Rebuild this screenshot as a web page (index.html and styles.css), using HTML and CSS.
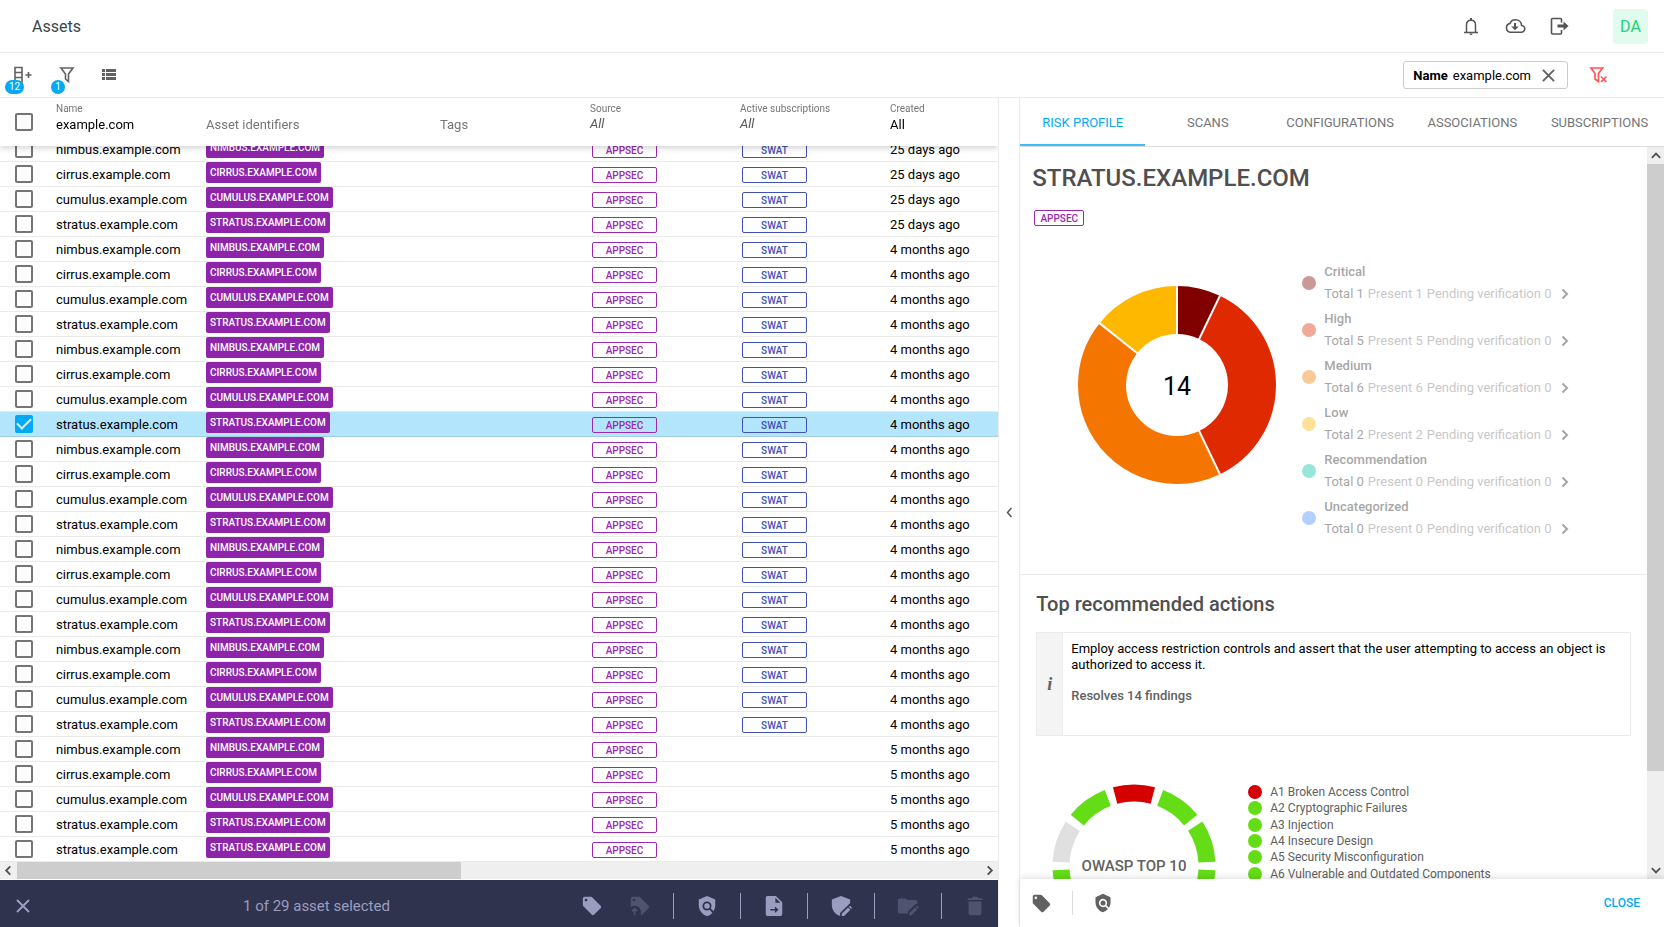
FILE: index.html
```html
<!DOCTYPE html>
<html lang="en">
<head>
    <meta charset="UTF-8">
    <meta name="viewport" content="width=device-width, initial-scale=1.0">
    <title>Assets</title>
    <link rel="stylesheet" href="styles.css">
</head>
<body>
    <!-- Shared icons -->
    <svg class="sprite" aria-hidden="true">
        <symbol id="icon-tag" viewBox="0 0 24 24"><path d="M21.4 11.6l-9-9A2 2 0 0 0 11 2H4a2 2 0 0 0-2 2v7c0 .6.2 1.1.6 1.4l9 9a2 2 0 0 0 2.8 0l7-7a2 2 0 0 0 0-2.8zM5.500 7a1.500 1.500 0 1 1 0-3 1.500 1.500 0 0 1 0 3z"/></symbol>
        <symbol id="icon-policy" viewBox="0 0 24 24"><path d="M21 5l-9-4-9 4v6c0 5.550 3.840 10.740 9 12 2.300-.560 4.330-1.900 5.880-3.710l-3.120-3.120a5 5 0 1 1 1.420-1.420l2.900 2.900C20.290 15.690 21 13.380 21 11z"/><circle cx="12" cy="12" r="3"/></symbol>
        <symbol id="icon-close" viewBox="0 0 14 14"><path d="M1 1l12 12M13 1L1 13" fill="none" stroke="currentColor" stroke-width="2"/></symbol>
        <symbol id="icon-chevron" viewBox="0 0 8 12"><path d="M1.500 1.500L6 6l-4.500 4.500" fill="none" stroke="currentColor" stroke-width="2"/></symbol>
    </svg>

    <header class="topbar">
        <h1 class="page-title">Assets</h1>
        <nav class="topbar-actions">
            <button class="icon-btn" aria-label="Notifications"><svg width="24" height="24" viewBox="0 0 24 24"><path d="M5 18.500h14M7.500 18.500v-7.500c0-3 2-4.800 4.500-4.800s4.500 1.800 4.500 4.800v7.500" fill="none" stroke="currentColor" stroke-width="1.500"/><path d="M11 4h2v2.500h-2zM10.500 19.500h3a1.500 1.500 0 0 1-3 0z"/></svg></button>
            <button class="icon-btn" aria-label="Downloads"><svg width="24" height="24" viewBox="0 0 24 24"><path d="M7 18.200h11.200a3.300 3.300 0 0 0 .4-6.700C18.400 8 15.800 5.800 12.500 5.800c-2.600 0-4.600 1.300-5.400 3.600A4.500 4.500 0 0 0 7 18.200z" fill="none" stroke="currentColor" stroke-width="1.600"/><path d="M11 9h2v3.500h2.800L12 16.300l-3.800-3.800H11z"/></svg></button>
            <button class="icon-btn" aria-label="Log out"><svg width="24" height="24" viewBox="0 0 24 24"><path d="M14.500 8.500V5.500a1 1 0 0 0-1-1h-8a1 1 0 0 0-1 1v13.500a1 1 0 0 0 1 1h8a1 1 0 0 0 1-1v-3" fill="none" stroke="currentColor" stroke-width="1.600"/><path d="M10.500 10.500h6V7.500l5 4.500-5 4.500v-3h-6z"/></svg></button>
            <button class="avatar">DA</button>
        </nav>
    </header>

    <div class="toolbar">
        <button class="tool" aria-label="Columns">
            <svg width="20" height="18" viewBox="0 0 20 18"><path d="M2 1.500h7v15H2zM2 6.500h7M2 11.500h7M12.500 9h6M15.500 6v6" fill="none" stroke="currentColor" stroke-width="1.600"/></svg>
            <span class="badge">12</span>
        </button>
        <button class="tool" aria-label="Filters">
            <svg width="16" height="18" viewBox="0 0 16 18"><path d="M2 2h12l-4.500 6v7.500L6.500 13V8z" fill="none" stroke="currentColor" stroke-width="1.600"/></svg>
            <span class="badge">1</span>
        </button>
        <button class="tool" aria-label="List view">
            <svg width="16" height="14" viewBox="0 0 16 14"><path d="M1 1h3v3H1zM5 1h10v3H5zM1 5h3v3H1zM5 5h10v3H5zM1 9h3v3H1zM5 9h10v3H5z"/></svg>
        </button>
        <div class="filter-chip">
            <strong>Name</strong>
            <span>example.com</span>
            <button class="chip-close" aria-label="Remove filter"><svg width="13" height="13"><use href="#icon-close"/></svg></button>
        </div>
        <button class="clear-filters" aria-label="Clear filters">
            <svg width="19" height="18" viewBox="0 0 19 18"><path d="M2 2h11.500L9.500 7.500v8L6 13V7.500zM12 10.500l5.500 5.500M17.500 10.500L12 16" fill="none" stroke="currentColor" stroke-width="1.700"/></svg>
        </button>
    </div>

    <main class="workspace">
        <section class="assets">
            <div class="table-scroll" id="table-scroll">
                <table class="asset-table">
                    <thead>
                        <tr>
                            <th class="col-check"><input type="checkbox" class="check" aria-label="Select all"></th>
                            <th class="col-name"><label class="th-label" for="filter-name">Name</label><input id="filter-name" class="th-input" type="text" value="example.com"></th>
                            <th class="col-ids"><span class="th-label"></span><span class="th-empty">Asset identifiers</span></th>
                            <th class="col-tags"><span class="th-label"></span><span class="th-empty">Tags</span></th>
                            <th class="col-source"><span class="th-label">Source</span><span class="th-all">All</span></th>
                            <th class="col-subs"><span class="th-label">Active subscriptions</span><span class="th-all">All</span></th>
                            <th><span class="th-label">Created</span><span class="th-value">All</span></th>
                        </tr>
                    </thead>
                    <tbody id="asset-rows"></tbody>
                </table>
            </div>
            <div class="scrollbar-x">
                <svg class="arrow arrow-left" width="8" height="11"><use href="#icon-chevron"/></svg>
                <div class="track"><div class="thumb"></div></div>
                <svg class="arrow" width="8" height="11"><use href="#icon-chevron"/></svg>
            </div>
            <footer class="selection-bar">
                <button class="bar-close" aria-label="Clear selection"><svg width="14" height="14"><use href="#icon-close"/></svg></button>
                <span class="selection-text">1 of 29 asset selected</span>
                <div class="bar-actions">
                    <button class="bar-btn" aria-label="Tag"><svg width="22" height="22"><use href="#icon-tag"/></svg></button>
                    <button class="bar-btn" aria-label="Inherit tag" disabled><svg width="22" height="22" viewBox="0 0 24 24"><path d="M21.400 11.600l-9-9A2 2 0 0 0 11 2H4a2 2 0 0 0-2 2v9c1.200-.800 2.500-1.200 4-1.200 4 0 7 3 7 7V22c.600 0 1-.200 1.400-.600l7-7a2 2 0 0 0 0-2.800zM5.500 7a1.500 1.500 0 1 1 0-3 1.500 1.500 0 0 1 0 3z"/><path d="M6 22v-7M3.300 17.500L6 14.800l2.700 2.700" fill="none" stroke="currentColor" stroke-width="1.800"/></svg></button>
                    <span class="divider"></span>
                    <button class="bar-btn" aria-label="Scan"><svg width="22" height="22"><use href="#icon-policy"/></svg></button>
                    <span class="divider"></span>
                    <button class="bar-btn" aria-label="Export"><svg width="22" height="22" viewBox="0 0 24 24"><path fill-rule="evenodd" d="M14 1H5a2 2 0 0 0-2 2v18a2 2 0 0 0 2 2h14a2 2 0 0 0 2-2V8zM13.500 3l5.500 5.500h-5.500zM8 15.200h5v-2.700l4 3.600-4 3.600V17H8z"/></svg></button>
                    <span class="divider"></span>
                    <button class="bar-btn" aria-label="Edit policy"><svg width="22" height="22" viewBox="0 0 24 24"><path d="M22 5L12 1 2 5v6c0 5.500 3.800 10.500 9 12v-3.500L21.300 9.500l.7-.500z"/><path d="M12.800 20.500V23h2.500l7-7-2.500-2.500zM20.600 12.700l2.500 2.500.9-1.200-2-2.200z"/></svg></button>
                    <span class="divider"></span>
                    <button class="bar-btn" aria-label="Edit group" disabled><svg width="22" height="22" viewBox="0 0 26 24"><path d="M12 5l-2-2H3a2 2 0 0 0-2 2v14a2 2 0 0 0 2 2h10v-2.500l9-9H24V7a2 2 0 0 0-2-2z"/><path d="M14.500 20.500V23H17l7-7-2.500-2.500zM22.300 12.700l2.500 2.500 1.200-1.200-2.500-2.500z"/></svg></button>
                    <span class="divider"></span>
                    <button class="bar-btn" aria-label="Delete" disabled><svg width="22" height="22" viewBox="0 0 24 24"><path d="M5 20a2 2 0 0 0 2 2h10a2 2 0 0 0 2-2V7H5zM20 3.500h-4.500l-1-1.500h-5l-1 1.500H4v2h16z"/></svg></button>
                </div>
            </footer>
        </section>

        <button class="collapse" aria-label="Collapse details"><svg width="7" height="11" viewBox="0 0 7 11"><path d="M5.500 1L1.500 5.500l4 4.500" fill="none" stroke="currentColor" stroke-width="1.500"/></svg></button>

        <aside class="details">
            <nav class="tabs">
                <a class="tab active" href="#risk">RISK PROFILE</a>
                <a class="tab" href="#scans">SCANS</a>
                <a class="tab" href="#configurations">CONFIGURATIONS</a>
                <a class="tab" href="#associations">ASSOCIATIONS</a>
                <a class="tab" href="#subscriptions">SUBSCRIPTIONS</a>
            </nav>
            <div class="details-view">
                <div class="details-scroll">
                    <section class="profile">
                        <h2 class="asset-title">STRATUS.EXAMPLE.COM</h2>
                        <span class="pill pill-small">APPSEC</span>
                        <div class="risk">
                            <svg class="donut" width="198" height="198" viewBox="-99 -99 198 198" role="img" aria-label="14 findings">
                                <g fill="none" stroke-width="48" transform="rotate(-90)">
                                    <circle r="75" pathLength="14" stroke="#800000" stroke-dasharray="1 13"/>
                                    <circle r="75" pathLength="14" stroke="#df2900" stroke-dasharray="5 9" stroke-dashoffset="-1"/>
                                    <circle r="75" pathLength="14" stroke="#f47500" stroke-dasharray="6 8" stroke-dashoffset="-6"/>
                                    <circle r="75" pathLength="14" stroke="#ffb800" stroke-dasharray="2 12" stroke-dashoffset="-12"/>
                                </g>
                                <g stroke="#fff" stroke-width="2">
                                    <path d="M0-50v-50"/>
                                    <path d="M0-50v-50" transform="rotate(25.700)"/>
                                    <path d="M0-50v-50" transform="rotate(154.300)"/>
                                    <path d="M0-50v-50" transform="rotate(308.600)"/>
                                </g>
                                <text class="donut-total" y="10" text-anchor="middle">14</text>
                            </svg>
                            <ul class="severities" id="severities"></ul>
                        </div>
                    </section>
                    <section class="actions">
                        <h3 class="section-title">Top recommended actions</h3>
                        <div class="action-card">
                            <div class="action-icon">i</div>
                            <div class="action-body">
                                <p>Employ access restriction controls and assert that the user attempting to access an object is authorized to access it.</p>
                                <p class="resolves">Resolves 14 findings</p>
                            </div>
                        </div>
                        <div class="owasp">
                            <svg width="164" height="164" viewBox="-82 -82 164 164" role="img" aria-label="OWASP Top 10">
                                <g fill="none" stroke="#64dd17" stroke-width="17" id="owasp-ring"></g>
                                <text class="owasp-title" y="5" text-anchor="middle">OWASP TOP 10</text>
                            </svg>
                            <ul class="owasp-list">
                                <li class="fail">A1 Broken Access Control</li>
                                <li>A2 Cryptographic Failures</li>
                                <li>A3 Injection</li>
                                <li>A4 Insecure Design</li>
                                <li>A5 Security Misconfiguration</li>
                                <li>A6 Vulnerable and Outdated Components</li>
                            </ul>
                        </div>
                    </section>
                </div>
                <div class="scrollbar-y">
                    <svg class="arrow arrow-up" width="8" height="11"><use href="#icon-chevron"/></svg>
                    <div class="track"><div class="thumb"></div></div>
                    <svg class="arrow arrow-down" width="8" height="11"><use href="#icon-chevron"/></svg>
                </div>
            </div>
            <footer class="details-footer">
                <button class="icon-btn" aria-label="Tag"><svg width="21" height="21"><use href="#icon-tag"/></svg></button>
                <span class="divider"></span>
                <button class="icon-btn" aria-label="Scan"><svg width="20" height="20"><use href="#icon-policy"/></svg></button>
                <button class="close-btn">CLOSE</button>
            </footer>
        </aside>
    </main>

    <script src="script.js"></script>
</body>
</html>
```

FILE: styles.css
```css
* {
    box-sizing: border-box;
}

body {
    margin: 0;
    height: 100vh;
    display: flex;
    flex-direction: column;
    overflow: hidden;
    font-family: Roboto, "Liberation Sans", sans-serif;
    font-size: 13px;
    color: #000;
    background: #fff;
}

button {
    font-family: inherit;
    padding: 0;
    border: none;
    background: none;
    color: inherit;
    cursor: pointer;
}

h1, h2, h3, p, ul {
    margin: 0;
    padding: 0;
}

ul {
    list-style: none;
}

svg {
    display: block;
    fill: currentColor;
}

.sprite {
    display: none;
}

/* Top bar */
.topbar {
    display: flex;
    align-items: center;
    justify-content: space-between;
    flex: none;
    height: 53px;
    padding: 0 16px 0 32px;
    border-bottom: 1px solid #ebebeb;
}

.page-title {
    font-size: 16px;
    font-weight: 400;
    color: #37474f;
}

.topbar-actions {
    display: flex;
    align-items: center;
    gap: 20px;
    color: #555;
}

.avatar {
    width: 35px;
    height: 35px;
    margin-left: 22px;
    border-radius: 4px;
    background: #e1fbee;
    color: #1fd074;
    font-size: 16px;
}

/* Toolbar */
.toolbar {
    display: flex;
    align-items: center;
    flex: none;
    height: 45px;
    padding: 0 56px 0 13px;
    border-bottom: 1px solid #ebebeb;
    color: #616161;
}

.tool {
    position: relative;
    margin-right: 26px;
}

.badge {
    position: absolute;
    left: -8px;
    top: 14px;
    min-width: 14px;
    height: 14px;
    padding: 0 4px;
    border-radius: 7px;
    background: #03a9f4;
    color: #fff;
    font-size: 10px;
    line-height: 14px;
}

.filter-chip {
    display: flex;
    align-items: center;
    gap: 5px;
    height: 28px;
    margin-left: auto;
    margin-right: 21px;
    padding: 0 12px 0 9px;
    border: 1px solid #ccc;
    border-radius: 3px;
    color: #000;
}

.filter-chip strong {
    font-weight: 700;
}

.chip-close {
    margin-left: 6px;
    color: #616161;
}

.clear-filters {
    color: #f55;
}

/* Main split */
.workspace {
    display: grid;
    grid-template-columns: 31fr 20px 20fr;
    grid-template-rows: minmax(0, 1fr);
    flex: 1;
    min-height: 0;
}

.assets {
    display: flex;
    flex-direction: column;
    min-width: 0;
    border-right: 1px solid #ebebeb;
}

.table-scroll {
    flex: 1;
    min-height: 0;
    overflow: hidden;
}

.asset-table {
    width: 100%;
    table-layout: fixed;
    border-spacing: 0;
}

.asset-table thead {
    position: sticky;
    top: 0;
    z-index: 1;
    background: #fff;
    box-shadow: 0 2px 6px rgba(0, 0, 0, 0.18);
}

.asset-table th {
    height: 48px;
    padding: 5px 0 0;
    font-weight: 400;
    text-align: left;
    vertical-align: top;
}

.asset-table .col-check {
    width: 56px;
    padding: 0 0 0 15px;
    vertical-align: middle;
}

.col-name,
.col-tags,
.col-source,
.col-subs {
    width: 150px;
}

.col-ids {
    width: 234px;
}

.th-label {
    display: block;
    height: 14px;
    font-size: 10px;
    line-height: 12px;
    color: #757575;
}

.th-input {
    display: block;
    width: 100%;
    padding: 0;
    border: none;
    background: none;
    font: inherit;
    line-height: 16px;
}

.th-empty,
.th-value {
    display: block;
    line-height: 16px;
}

.th-empty {
    color: #757575;
}

.th-all {
    display: block;
    line-height: 14px;
    font-style: italic;
    color: #555;
}

.asset-table td {
    height: 25px;
    padding: 1px 0 0;
    border-bottom: 1px solid #ebebeb;
    line-height: 16px;
    white-space: nowrap;
}

.asset-table td.col-ids {
    padding: 0;
    vertical-align: top;
}

tr.selected {
    background: #b3e5fc;
}

tr.selected td {
    border-color: #a0cfe3;
}

.check {
    appearance: none;
    display: grid;
    place-content: center;
    width: 18px;
    height: 18px;
    margin: 0;
    border: 2px solid #757575;
    border-radius: 2px;
    background: #fff;
}

.check:checked {
    border-color: #03a9f4;
    background: #03a9f4;
}

.check:checked::before {
    content: "";
    width: 12px;
    height: 6px;
    margin-bottom: 4px;
    border: solid #d5f1fd;
    border-width: 0 0 2px 2px;
    transform: rotate(-45deg);
}

.identifier {
    display: inline-block;
    height: 21px;
    padding: 0 4px;
    border-radius: 2px;
    background: #8e24aa;
    color: #fff;
    font-size: 10px;
    font-weight: 500;
    line-height: 21px;
    vertical-align: top;
}

.pill {
    display: block;
    width: 65px;
    height: 16px;
    margin-left: 2px;
    border: 1px solid #9c27b0;
    border-radius: 2px;
    color: #9c27b0;
    font-size: 10px;
    font-weight: 500;
    line-height: 15px;
    text-align: center;
}

.pill-swat {
    border-color: #3f51b5;
    color: #3f51b5;
}

/* Scrollbars */
.scrollbar-x,
.scrollbar-y {
    display: flex;
    align-items: center;
    flex: none;
    background: #efefef;
    color: #505050;
}

.scrollbar-x {
    height: 17px;
    margin-bottom: 1px;
    padding: 0 4px;
}

.scrollbar-y {
    flex-direction: column;
    width: 17px;
    padding: 3px 0;
}

.track {
    display: flex;
    flex: 1;
    align-self: stretch;
}

.scrollbar-x .track {
    margin: 0 5px;
}

.scrollbar-y .track {
    flex-direction: column;
    margin: 3px 0;
}

.thumb {
    background: #cdcdcd;
}

.scrollbar-x .thumb {
    width: 46%;
}

.scrollbar-y .thumb {
    height: 87%;
}

.arrow-left {
    transform: rotate(180deg);
}

.arrow-up {
    transform: rotate(-90deg);
}

.arrow-down {
    transform: rotate(90deg);
}

/* Selection bar */
.selection-bar {
    display: flex;
    align-items: center;
    flex: none;
    height: 47px;
    padding: 5px 12px 0 16px;
    background: #2f334d;
    color: #9a9dc0;
}

.selection-text {
    flex: 1;
    padding-left: 213px;
    font-size: 15px;
}

.bar-actions {
    display: flex;
    align-items: center;
    gap: 22px;
}

.bar-btn:disabled {
    opacity: 0.3;
}

.bar-btn + .bar-btn {
    margin-left: 4px;
}

.divider {
    width: 1px;
    height: 26px;
    background: #9a9dc0;
}

.collapse {
    display: flex;
    align-items: center;
    justify-content: center;
    color: #555;
}

/* Details panel */
.details {
    display: flex;
    flex-direction: column;
    min-width: 0;
    border-left: 1px solid #ebebeb;
}

.tabs {
    display: flex;
    flex: none;
    height: 49px;
    border-bottom: 1px solid #dcdcdc;
}

.tab {
    display: flex;
    align-items: center;
    justify-content: center;
    flex: 1 0 auto;
    min-width: 125px;
    padding: 2px 16px 0;
    border-bottom: 2px solid transparent;
    color: #757575;
    text-decoration: none;
}

.tab.active {
    border-color: #40bdf7;
    color: #03a9f4;
}

.details-view {
    display: flex;
    flex: 1;
    min-height: 0;
}

.details-scroll {
    flex: 1;
    overflow: hidden;
}

.profile {
    padding: 17px 12px 33px;
    border-bottom: 1px solid #ebebeb;
}

.asset-title {
    margin-bottom: 18px;
    font-size: 24px;
    font-weight: 500;
    line-height: 28px;
    color: #4f4f4f;
}

.pill-small {
    width: 50px;
}

.risk {
    display: flex;
    align-items: flex-start;
    gap: 26px;
    padding: 33px 0 0 46px;
}

.donut {
    flex: none;
    margin-top: 27px;
}

.donut-total {
    fill: #000;
    font-size: 25px;
}

.severity {
    display: grid;
    grid-template-columns: 14px auto;
    align-items: center;
    gap: 8px;
    height: 47px;
    line-height: 22px;
    opacity: 0.4;
}

.severity h4 {
    margin: 0;
    font-size: 13px;
    font-weight: 500;
    color: #222;
}

.dot {
    height: 14px;
    border-radius: 50%;
}

.severity-counts {
    display: flex;
    align-items: center;
    gap: 4px;
    color: #757575;
}

.severity-counts b {
    font-weight: 400;
    color: #222;
}

.severity-counts svg {
    margin-left: 6px;
    color: #222;
}

.actions {
    padding: 17px 16px 16px;
}

.section-title {
    font-size: 20px;
    font-weight: 500;
    line-height: 24px;
    color: #4f4f4f;
}

.action-card {
    display: flex;
    min-height: 104px;
    margin-top: 16px;
    border: 1px solid #ebebeb;
}

.action-icon {
    display: flex;
    align-items: center;
    justify-content: center;
    width: 26px;
    border-right: 1px solid #ebebeb;
    background: #f4f4f4;
    color: #616161;
    font: italic bold 18px "Liberation Serif", serif;
}

.action-body {
    flex: 1;
    padding: 8px;
    line-height: 16px;
}

.resolves {
    margin-top: 15px;
    font-weight: 500;
    color: #616161;
}

.owasp {
    display: flex;
    gap: 32px;
    margin-top: 48px;
    padding-left: 16px;
}

.owasp-title {
    fill: #616161;
    font-size: 15px;
    font-weight: 500;
}

.owasp-list {
    display: grid;
    grid-auto-rows: 1fr;
    align-items: center;
    height: 98px;
    font-size: 12px;
    color: #616161;
}

.owasp-list li {
    display: flex;
    align-items: center;
    gap: 8px;
}

.owasp-list li::before {
    content: "";
    width: 14px;
    height: 14px;
    border-radius: 50%;
    background: #64dd17;
}

.owasp-list .fail::before {
    background: #d50000;
}

.details-footer {
    position: relative;
    display: flex;
    align-items: center;
    flex: none;
    gap: 20px;
    height: 48px;
    padding: 0 24px 0 11px;
    background: #fff;
    box-shadow: 0 -2px 6px rgba(0, 0, 0, 0.12);
    color: #616161;
}

.details-footer .divider {
    height: 24px;
    background: #dcdcdc;
}

.close-btn {
    margin-left: auto;
    color: #03a9f4;
    font-size: 12px;
    font-weight: 500;
}
```

FILE: script.js
```js
const names = ['nimbus', 'cirrus', 'cumulus', 'stratus'];
const total = 29;
const selected = 11;

function createdAt(i) {
    if (i < 4) return '25 days ago';
    return i < 24 ? '4 months ago' : '5 months ago';
}

let rows = '';
for (let i = 0; i < total; i++) {
    const name = (i === total - 1 ? 'stratus' : names[i % 4]) + '.example.com';
    const isSelected = i === selected;
    rows += `
        <tr class="${isSelected ? 'selected' : ''}">
            <td class="col-check"><input type="checkbox" class="check" aria-label="Select ${name}" ${isSelected ? 'checked' : ''}></td>
            <td>${name}</td>
            <td class="col-ids"><span class="identifier">${name.toUpperCase()}</span></td>
            <td></td>
            <td><span class="pill">APPSEC</span></td>
            <td>${i < 24 ? '<span class="pill pill-swat">SWAT</span>' : ''}</td>
            <td>${createdAt(i)}</td>
        </tr>`;
}
document.getElementById('asset-rows').innerHTML = rows;

// Keep the last row in view
const scroller = document.getElementById('table-scroll');
scroller.scrollTop = scroller.scrollHeight;

const severities = [
    ['Critical', 1, '#800000'],
    ['High', 5, '#df2900'],
    ['Medium', 6, '#f57900'],
    ['Low', 2, '#ffb800'],
    ['Recommendation', 0, '#00bfa5'],
    ['Uncategorized', 0, '#448aff']
];
document.getElementById('severities').innerHTML = severities.map(([label, count, color]) => `
    <li class="severity">
        <span class="dot" style="background: ${color}"></span>
        <div>
            <h4>${label}</h4>
            <div class="severity-counts"><b>Total ${count}</b><span>Present ${count}</span><span>Pending verification 0</span><svg width="8" height="12"><use href="#icon-chevron"/></svg></div>
        </div>
    </li>`).join('');

// Ten ring segments, 30 degrees each with a 6 degree gap
const ringColors = { 0: '#d50000', 8: '#e0e0e0' };
let ring = '';
for (let i = 0; i < 10; i++) {
    ring += `<circle r="73" pathLength="360" stroke-dasharray="30 330" stroke="${ringColors[i] || '#64dd17'}" transform="rotate(${i * 36 - 105})"/>`;
}
document.getElementById('owasp-ring').innerHTML = ring;
```
